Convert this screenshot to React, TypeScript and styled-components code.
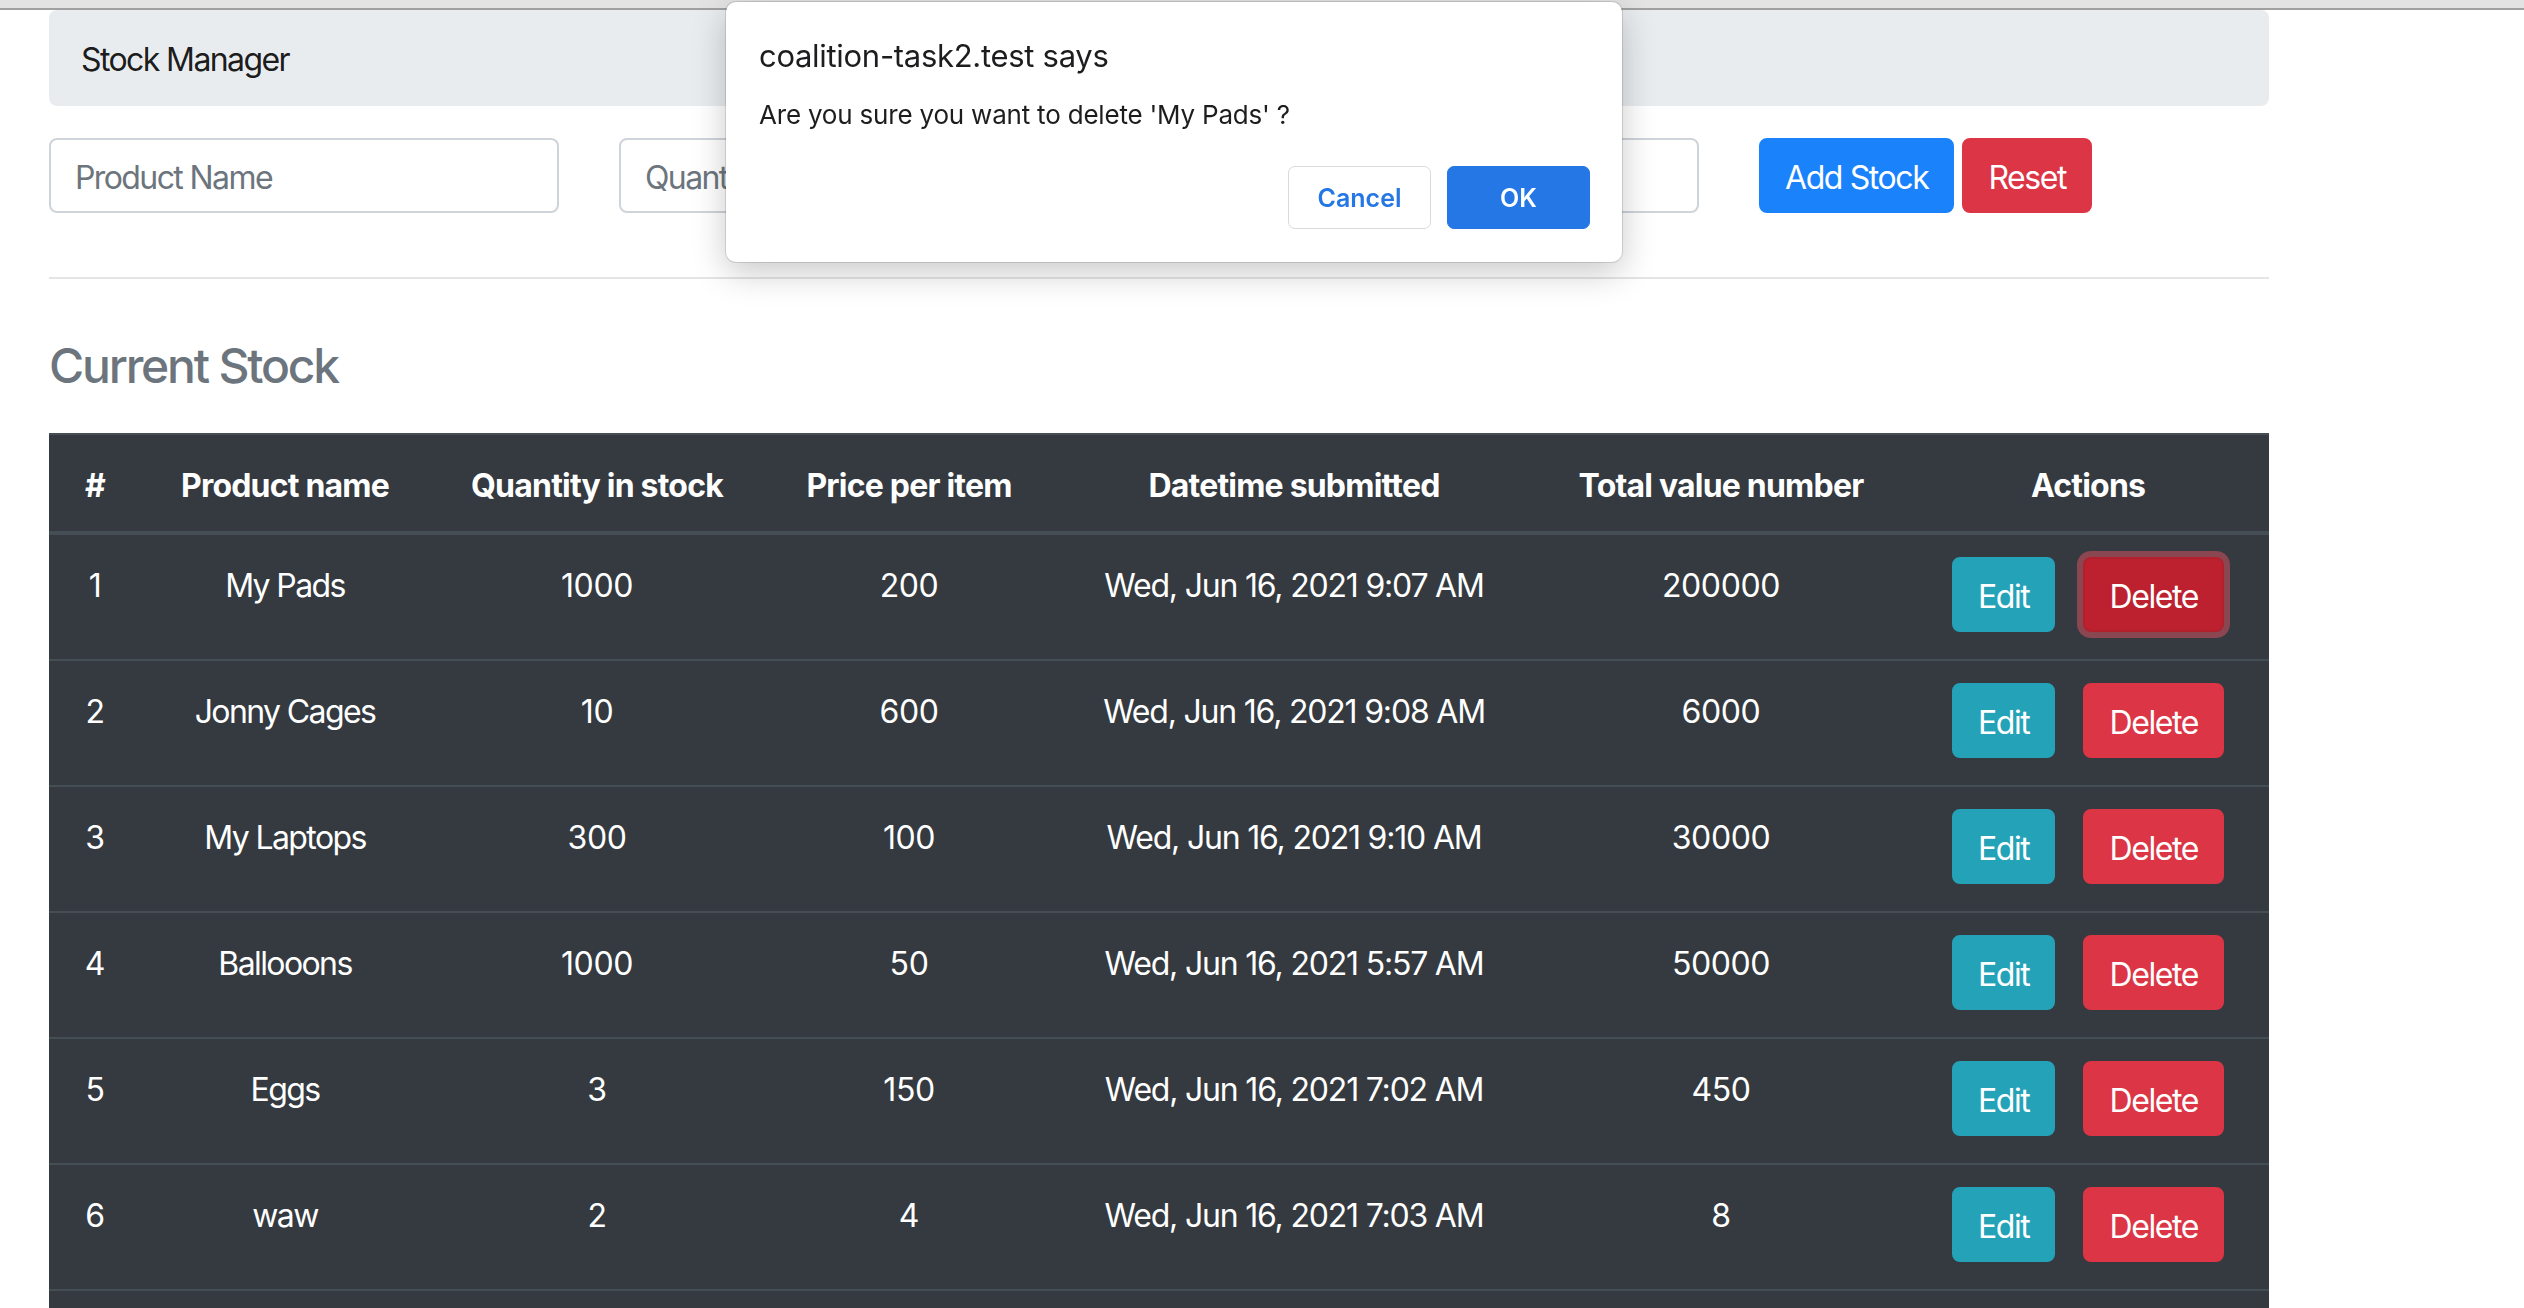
import React from "react";
import styled, { createGlobalStyle, css } from "styled-components";

const GlobalStyle = createGlobalStyle`
  html, body { margin: 0; padding: 0; background: #ffffff; }
  body {
    font-family: Inter, "Noto Sans", "Liberation Sans", sans-serif;
    color: #212529;
    overflow: hidden;
  }
  * { box-sizing: border-box; }
`;

const ChromeEdge = styled.div`
  height: 10px;
  background: #e3e3e3;
  border-bottom: 2px solid #a0a0a0;
`;

const Container = styled.div`
  width: 2220px;
  margin-left: 49px;
`;

const Navbar = styled.nav`
  height: 96px;
  background: #e9ecef;
  border-radius: 8px;
  display: flex;
  align-items: center;
  padding: 3px 32px 0;
`;

const Brand = styled.span`
  font-size: 32px;
  line-height: 48px;
  color: rgba(0, 0, 0, 0.9);
  letter-spacing: -1.6px;
`;

const FormRow = styled.form`
  display: grid;
  grid-template-columns: repeat(4, 510px);
  column-gap: 60px;
  margin-top: 32px;
`;

const Input = styled.input`
  width: 100%;
  height: 75px;
  border: 2px solid #ced4da;
  border-radius: 8px;
  padding: 3px 24px 0;
  font-family: inherit;
  font-size: 32px;
  color: #495057;
  background: #fff;
  letter-spacing: -1.6px;
  &::placeholder {
    color: #6c757d;
  }
`;

const ButtonGroup = styled.div`
  display: flex;
  gap: 8px;
`;

type Variant = "primary" | "danger" | "info" | "dangerFocus";

const variants: Record<Variant, ReturnType<typeof css>> = {
  primary: css`
    background: #1a82fb;
    border-color: #1a82fb;
  `,
  danger: css`
    background: #dc3545;
    border-color: #dc3545;
  `,
  info: css`
    background: #24a2b8;
    border-color: #24a2b8;
  `,
  dangerFocus: css`
    background: #bd2130;
    border-color: #b21f2d;
    box-shadow: 0 0 0 6px rgba(225, 83, 97, 0.5);
  `,
};

const Button = styled.button<{ $variant: Variant }>`
  height: 75px;
  padding: 4px 24px 0;
  border: 2px solid transparent;
  border-radius: 8px;
  font-family: inherit;
  font-size: 32px;
  line-height: 48px;
  color: #ffffff;
  letter-spacing: -1.4px;
  cursor: pointer;
  ${(p) => variants[p.$variant]}
`;

const Divider = styled.hr`
  border: 0;
  border-top: 2px solid rgba(0, 0, 0, 0.1);
  margin: 64px 0 0;
`;

const Heading = styled.h4`
  margin: 58px 0 0;
  font-size: 48px;
  line-height: 58px;
  font-weight: 500;
  color: #6c757d;
  letter-spacing: -2.2px;
`;

const Table = styled.table`
  margin-top: 38px;
  width: 2220px;
  table-layout: fixed;
  border-collapse: collapse;
  background: #343a40;
  color: #ffffff;
  font-size: 32px;
  line-height: 48px;
`;

const Th = styled.th`
  padding: 27px 0 21px;
  border-top: 2px solid #454d55;
  border-bottom: 4px solid #454d55;
  font-weight: 700;
  text-align: center;
  letter-spacing: -0.8px;
`;

type Kind = "num" | "text" | "date" | "actions";

const spacing: Record<Kind, string> = {
  num: "-0.4px",
  text: "-1.6px",
  date: "-1.2px",
  actions: "0",
};

const Td = styled.td<{ $kind: Kind }>`
  padding: ${(p) => (p.$kind === "actions" ? "22px 0 26px" : "27px 0 21px")};
  border-top: 2px solid #454d55;
  vertical-align: top;
  text-align: center;
  letter-spacing: ${(p) => spacing[p.$kind]};
  white-space: nowrap;
`;

const Actions = styled.div`
  display: flex;
  justify-content: center;
  gap: 28px;
  height: 76px;
`;

const Dialog = styled.div`
  position: fixed;
  top: 2px;
  left: 726px;
  width: 896px;
  height: 260px;
  background: #ffffff;
  border-radius: 10px;
  box-shadow: 0 0 0 1px rgba(0, 0, 0, 0.12), 0 10px 34px rgba(0, 0, 0, 0.22);
  padding: 36px 32px 0 33px;
  display: flex;
  flex-direction: column;
`;

const DialogTitle = styled.div`
  font-size: 31px;
  line-height: 36px;
  color: #1d1d1f;
  letter-spacing: -0.3px;
`;

const DialogMessage = styled.div`
  margin-top: 26px;
  font-size: 26px;
  line-height: 30px;
  color: #1d1d1f;
  letter-spacing: -0.2px;
`;

const DialogButtons = styled.div`
  margin-top: 36px;
  display: flex;
  justify-content: flex-end;
  gap: 16px;
`;

const DialogButton = styled.button<{ $primary?: boolean }>`
  width: 143px;
  height: 63px;
  border-radius: 7px;
  font-family: inherit;
  font-size: 25px;
  font-weight: 600;
  cursor: pointer;
  ${(p) =>
    p.$primary
      ? css`
          background: #2477e5;
          border: 1px solid #2477e5;
          color: #ffffff;
        `
      : css`
          background: #ffffff;
          border: 1px solid #dadada;
          color: #2477e5;
        `}
`;

const rows = [
  { id: 1, name: "My Pads", qty: "1000", price: "200", date: "Wed, Jun 16, 2021 9:07 AM", total: "200000" },
  { id: 2, name: "Jonny Cages", qty: "10", price: "600", date: "Wed, Jun 16, 2021 9:08 AM", total: "6000" },
  { id: 3, name: "My Laptops", qty: "300", price: "100", date: "Wed, Jun 16, 2021 9:10 AM", total: "30000" },
  { id: 4, name: "Ballooons", qty: "1000", price: "50", date: "Wed, Jun 16, 2021 5:57 AM", total: "50000" },
  { id: 5, name: "Eggs", qty: "3", price: "150", date: "Wed, Jun 16, 2021 7:02 AM", total: "450" },
  { id: 6, name: "waw", qty: "2", price: "4", date: "Wed, Jun 16, 2021 7:03 AM", total: "8" },
];

const colWidths = [92, 288, 336, 288, 482, 372, 362];

export default function App() {
  return (
    <>
      <GlobalStyle />
      <ChromeEdge />
      <Container>
        <Navbar>
          <Brand>Stock Manager</Brand>
        </Navbar>
        <FormRow onSubmit={(e) => e.preventDefault()}>
          <Input placeholder="Product Name" />
          <Input placeholder="Quantity in stock" />
          <Input placeholder="Price per item" />
          <ButtonGroup>
            <Button type="submit" $variant="primary">Add Stock</Button>
            <Button type="button" $variant="danger">Reset</Button>
          </ButtonGroup>
        </FormRow>
        <Divider />
        <Heading>Current Stock</Heading>
        <Table>
          <colgroup>
            {colWidths.map((w, i) => (
              <col key={i} style={{ width: w }} />
            ))}
          </colgroup>
          <thead>
            <tr>
              <Th>#</Th>
              <Th>Product name</Th>
              <Th>Quantity in stock</Th>
              <Th>Price per item</Th>
              <Th>Datetime submitted</Th>
              <Th>Total value number</Th>
              <Th>Actions</Th>
            </tr>
          </thead>
          <tbody>
            {rows.map((r) => (
              <tr key={r.id}>
                <Td $kind="num">{r.id}</Td>
                <Td $kind="text">{r.name}</Td>
                <Td $kind="num">{r.qty}</Td>
                <Td $kind="num">{r.price}</Td>
                <Td $kind="date">{r.date}</Td>
                <Td $kind="num">{r.total}</Td>
                <Td $kind="actions">
                  <Actions>
                    <Button type="button" $variant="info">Edit</Button>
                    <Button type="button" $variant={r.id === 1 ? "dangerFocus" : "danger"}>Delete</Button>
                  </Actions>
                </Td>
              </tr>
            ))}
            <tr>
              <Td $kind="actions" colSpan={7}>
                <Actions />
              </Td>
            </tr>
          </tbody>
        </Table>
      </Container>
      <Dialog role="alertdialog">
        <DialogTitle>coalition-task2.test says</DialogTitle>
        <DialogMessage>Are you sure you want to delete 'My Pads' ?</DialogMessage>
        <DialogButtons>
          <DialogButton type="button">Cancel</DialogButton>
          <DialogButton type="button" $primary>OK</DialogButton>
        </DialogButtons>
      </Dialog>
    </>
  );
}
